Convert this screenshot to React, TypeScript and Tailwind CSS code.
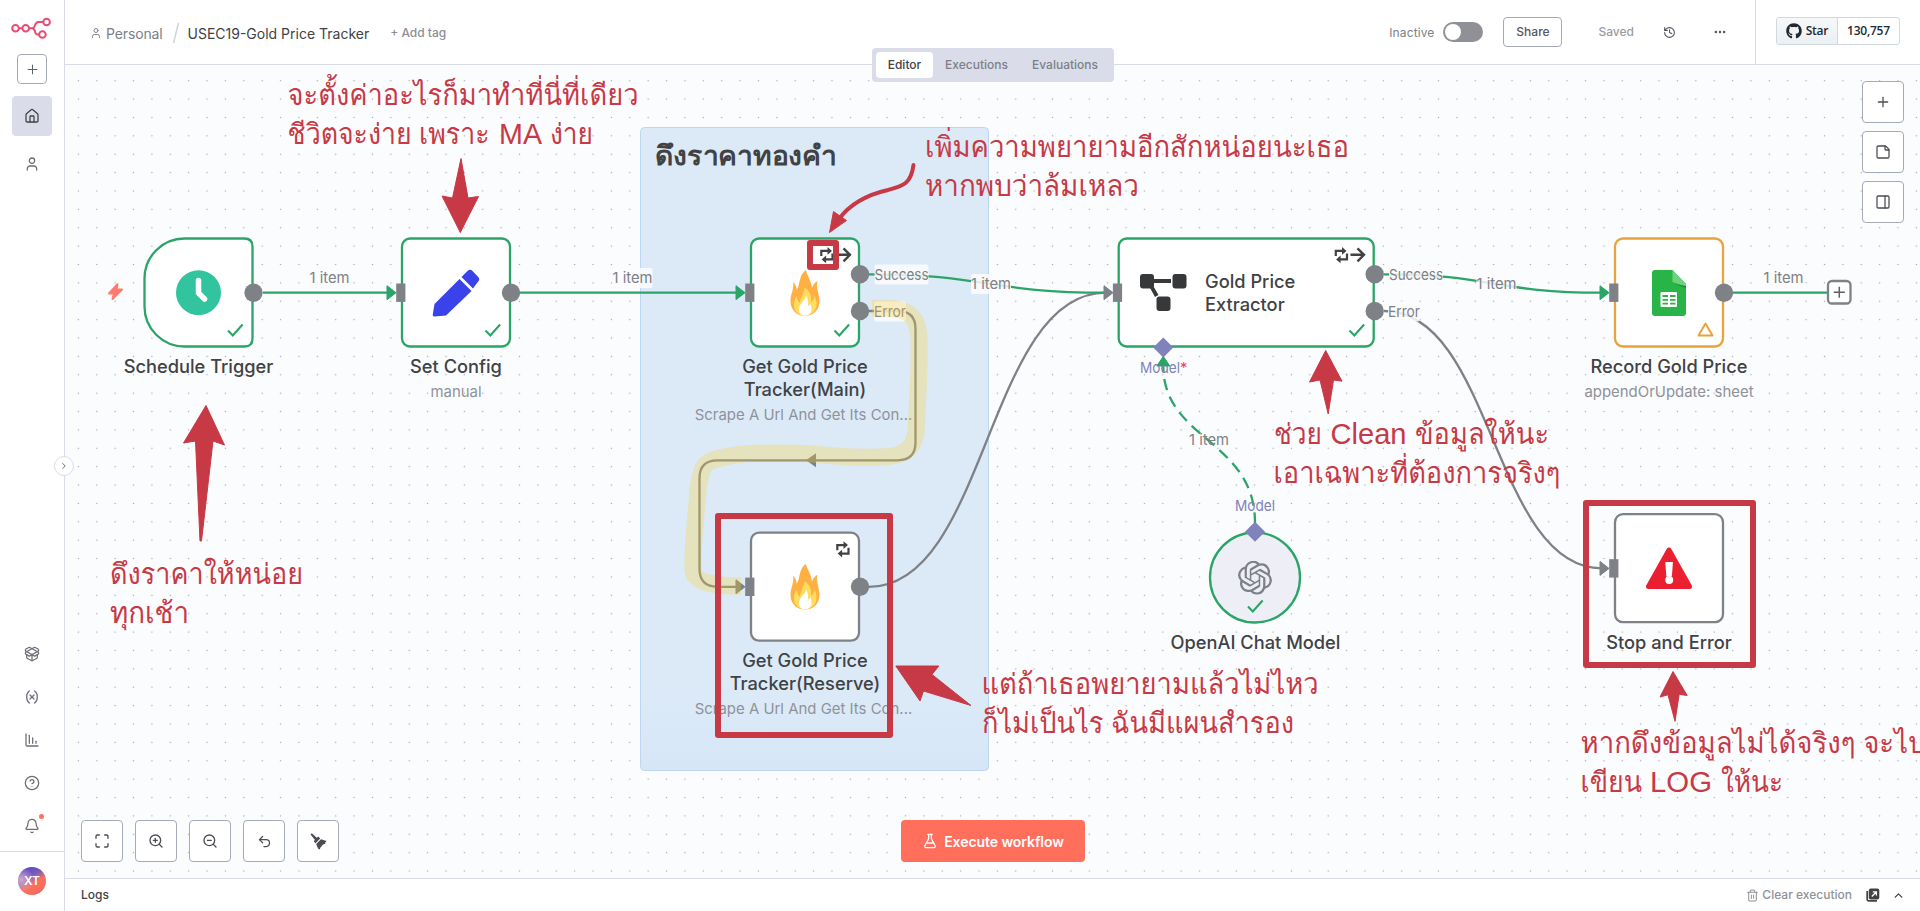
import React from "react";
import { Bell, ChartColumnDecreasing, ChevronRight, ChevronUp, CircleHelp, Ellipsis, FlaskConical, History, House, Maximize, PackageOpen, PanelRight, Plus, StickyNote, Trash2, Undo2, User, Variable, ZoomIn, ZoomOut } from "lucide-react";
import { FaGithub } from "react-icons/fa";
import { SiOpenai } from "react-icons/si";

const GREEN = "#2aa567";
const GREY = "#7e8186";
const RED = "#c73945";

function Logo() {
  return (
    <svg width="42" height="26" viewBox="0 0 42 26" fill="none" stroke="#ea4b71" strokeWidth="2">
      <circle cx="4.500" cy="13.200" r="3.300" />
      <circle cx="14.700" cy="13.200" r="3.300" />
      <circle cx="35.600" cy="7" r="3.300" />
      <circle cx="31.400" cy="19.500" r="3.300" />
      <path d="M7.800 13.200h3.600M18 13.200h3.200c4 0 1.600-6.200 6.400-6.200h4.700M21.200 13.200c3.800 0 1.800 6.300 5.200 6.300h1.700" />
    </svg>
  );
}

function SideIcon({ children, dot }: { children: React.ReactNode; dot?: boolean }) {
  return (
    <div className="relative flex h-[43px] w-full items-center justify-center text-[#6b6e75]">
      {children}
      {dot && <span className="absolute left-[39px] top-[10px] h-[5px] w-[5px] rounded-full bg-[#ff6f5c]" />}
    </div>
  );
}

function Sidebar() {
  return (
    <aside className="flex h-full w-[65px] shrink-0 flex-col items-center border-r border-[#d9dce8] bg-white">
      <div className="mt-[15px] h-[26px] w-[42px]"><Logo /></div>
      <button className="mt-[13px] flex h-[30px] w-[30px] items-center justify-center rounded-[4px] border border-[#a5a9b8] text-[#5c5f66]">
        <Plus size={15} strokeWidth={1.6} />
      </button>
      <div className="mt-3 flex h-10 w-10 items-center justify-center rounded-[4px] bg-[#dadde9] text-[#414244]">
        <House size={16} strokeWidth={1.9} />
      </div>
      <div className="mt-2 flex h-10 w-10 items-center justify-center text-[#6b6e75]">
        <User size={16} strokeWidth={1.9} />
      </div>
      <div className="mt-auto flex w-full flex-col pb-1">
        <SideIcon><PackageOpen size={16} strokeWidth={1.9} /></SideIcon>
        <SideIcon><Variable size={16} strokeWidth={1.9} /></SideIcon>
        <SideIcon><ChartColumnDecreasing size={16} strokeWidth={1.9} /></SideIcon>
        <SideIcon><CircleHelp size={16} strokeWidth={1.9} /></SideIcon>
        <SideIcon dot><Bell size={16} strokeWidth={1.9} /></SideIcon>
      </div>
      <div className="flex h-[60px] w-full items-center justify-center border-t border-[#d9dce8] pb-[2px]">
        <div className="flex h-7 w-7 items-center justify-center rounded-full bg-[radial-gradient(circle_at_12%_45%,#cfaacb_0%,transparent_45%),linear-gradient(150deg,#5b4bc4_15%,#7d5cb5_38%,#ff6f5c_58%,#f56c5c_82%,#6f5cc8_100%)] text-[12px] font-semibold text-white">XT</div>
      </div>
    </aside>
  );
}

function Header() {
  return (
    <header className="flex h-[65px] shrink-0 items-center border-b border-[#d9dce8] bg-white">
      <div className="flex items-center pl-[25px] pt-[2px]">
        <User size={12} strokeWidth={2} className="text-[#7d8087]" />
        <span className="ml-[4px] text-[14px] tracking-[-0.01em] text-[#7d8087]">Personal</span>
        <svg width="8" height="22" className="ml-[9px]"><path d="M6.5 1 1.5 21" stroke="#d0d4e2" strokeWidth="1.6" /></svg>
        <span className="ml-[8px] text-[14px] text-[#414244]">USEC19-Gold Price Tracker</span>
        <span className="ml-[21px] text-[12px] font-medium text-[#8b8e95]">+ Add tag</span>
      </div>
      <div className="ml-auto flex h-full items-center">
        <span className="pt-[2px] text-[12px] tracking-[0.01em] text-[#7d8087]">Inactive</span>
        <span className="ml-[9px] flex h-5 w-10 items-center rounded-full bg-[#8f9196] pl-[1.5px]"><span className="h-4 w-4 rounded-full bg-white" /></span>
        <span className="ml-[20px] flex h-[30px] w-[59px] items-center justify-center rounded-[4px] border border-[#a5a9b8] text-[12px] font-medium text-[#555860]">Share</span>
        <span className="ml-[36px] text-[12px] font-medium text-[#999ca3]">Saved</span>
        <History size={13} strokeWidth={2} className="ml-[29px] text-[#555860]" />
        <Ellipsis size={14} strokeWidth={2.4} className="ml-[37px] text-[#555860]" />
        <div className="ml-[28px] flex h-full w-[165px] items-center border-l border-[#d9dce8] pl-[20px]">
          <div className="mb-[2px] flex h-7 w-[124px] overflow-hidden rounded-[3px] border border-[#d1d9e0] font-['Open_Sans',sans-serif] text-[12px] font-semibold tracking-[-0.02em] text-[#24292f]">
            <span className="flex w-[61px] items-center justify-center gap-[4px] border-r border-[#d1d9e0] bg-linear-to-b from-[#f6f8fa] to-[#ebf0f4]"><FaGithub size={16} />Star</span>
            <span className="flex flex-1 items-center justify-center">130,757</span>
          </div>
        </div>
      </div>
    </header>
  );
}

function Check({ x, y }: { x: number; y: number }) {
  return <path d={`M${x - 7.5} ${y + 0.5}l4.8 5 9.8-11`} fill="none" stroke={GREEN} strokeWidth="2.1" />;
}

function Retry({ x, y }: { x: number; y: number }) {
  return (
    <g transform={`translate(${x} ${y})`}>
      <g fill="none" stroke="#414244" strokeWidth="2.200">
        <path d="M1.800 8.800V3.600h7M13 6.200v5.900H5.500" />
      </g>
      <path d="M8 -.3l4.500 3.900-4.500 3.900zM6.600 8.200v7.800l-4.500-3.900z" fill="#414244" />
    </g>
  );
}

function ArrowRight({ x, y }: { x: number; y: number }) {
  return <path d={`M${x - 1} ${y}h13.500M${x + 6} ${y - 6.5}l6.500 6.500-6.500 6.500`} fill="none" stroke="#414244" strokeWidth="2.400" />;
}

function Fire({ x, y }: { x: number; y: number }) {
  return (
    <g transform={`translate(${x} ${y})`}>
      <path d="M15.500 0C16 5 20.500 9 21.500 18 22.500 15 24 12.500 27 11 25 17 29 24 29 31 29 40 23 45.700 14.500 45.700 6 45.700 0 40 0 31 0 24 3.500 20 2.700 12 5 14 6 17 6.300 20 10 14 8 5 15.500 0z" fill="#ffb042" />
      <path d="M14 17.500C13.500 24 10 27 9.200 33 7.500 31.500 6.500 29 6 26 3 31 3 36 4.500 40 6.500 43.500 10 45.500 14.500 45.500 20 45.500 26.500 41.500 26 33 25.800 30 25 28 24 26 23.500 29 22.500 31 20.500 32 21.500 25 18 20 14 17.500z" fill="#ffdc5e" />
      <path d="M15.500 25.500C15.500 30 8.500 33 8.500 39.500 8.500 43.500 11 45.500 14.500 45.500 18.500 45.500 21 43 21 39 21 37 20.500 35 19.800 33.500 19.300 35 18.500 35.800 17.500 36 18.200 32 17 28 15.500 25.500z" fill="#fff" />
    </g>
  );
}

function Input({ x, y }: { x: number; y: number }) {
  return <rect x={x - 4.6} y={y - 9.2} width="9.200" height="18.400" fill={GREY} />;
}

function Output({ x, y }: { x: number; y: number }) {
  return <circle cx={x} cy={y} r="9.200" fill={GREY} />;
}

function Head({ x, y, color }: { x: number; y: number; color: string }) {
  return <path d={`M${x - 9} ${y - 7}v14l9-7z`} fill={color} stroke={color} strokeWidth="1" strokeLinejoin="round" />;
}

function Box({ x, y, w = 108, color }: { x: number; y: number; w?: number; color: string }) {
  return <rect x={x} y={y} width={w} height="108" rx="8" fill="#fff" stroke={color} strokeWidth="2.300" />;
}

function Name({ x, y, children }: { x: number; y: number; children: string }) {
  return <text x={x} y={y} textAnchor="middle" fontSize="18.250" fill="#414244" fontWeight="500">{children}</text>;
}

function Sub({ x, y, children }: { x: number; y: number; children: string }) {
  return <text x={x} y={y} textAnchor="middle" fontSize="14.950" fill="#8f9299">{children}</text>;
}

function Label({ x, y, w, color = GREY, plate = true, children }: { x: number; y: number; w: number; color?: string; plate?: boolean; children: string }) {
  return (
    <g>
      {plate && <rect x={x - w / 2} y={y - 10} width={w} height="20" rx="2" fill="#fbfcfe" fillOpacity=".85" />}
      <text x={x} y={y + 5} textAnchor="middle" fontSize="14.800" fill={color} textLength={w} lengthAdjust="spacingAndGlyphs">{children}</text>
    </g>
  );
}

const notes: { x: number; y: number; w: number; text: string }[] = [
  { x: 287.500, y: 105, w: 351, text: "จะตั้งค่าอะไรก็มาทำที่นี่ที่เดียว" },
  { x: 287.500, y: 143.500, w: 202, text: "ชีวิตจะง่าย เพราะ" },
  { x: 499, y: 143.500, w: 43, text: "MA" },
  { x: 550, y: 143.500, w: 43, text: "ง่าย" },
  { x: 925, y: 156.500, w: 424, text: "เพิ่มความพยายามอีกสักหน่อยนะเธอ" },
  { x: 925, y: 195.500, w: 214, text: "หากพบว่าล้มเหลว" },
  { x: 110, y: 584, w: 193, text: "ดึงราคาให้หน่อย" },
  { x: 110, y: 623, w: 79, text: "ทุกเช้า" },
  { x: 1274, y: 443.500, w: 48, text: "ช่วย" },
  { x: 1330.500, y: 443.500, w: 76, text: "Clean" },
  { x: 1415, y: 443.500, w: 134, text: "ข้อมูลให้นะ" },
  { x: 1273.500, y: 482.500, w: 287, text: "เอาเฉพาะที่ต้องการจริงๆ" },
  { x: 981.500, y: 694, w: 337, text: "แต่ถ้าเธอพยายามแล้วไม่ไหว" },
  { x: 982, y: 733, w: 312, text: "ก็ไม่เป็นไร ฉันมีแผนสำรอง" },
  { x: 1580.500, y: 753, w: 345, text: "หากดึงข้อมูลไม่ได้จริงๆ จะไป" },
  { x: 1580.500, y: 792, w: 61.500, text: "เขียน" },
  { x: 1650, y: 792, w: 62, text: "LOG" },
  { x: 1721, y: 792, w: 62, text: "ให้นะ" },
];

function Diagram() {
  return (
    <svg width="1855" height="813" viewBox="65 65 1855 813" className="absolute inset-0" fontFamily="Inter, sans-serif">
      <defs>
        <pattern id="dots" x="69.200" y="71.500" width="18.380" height="18.380" patternUnits="userSpaceOnUse">
          <circle cx="9.190" cy="9.190" r=".75" fill="#a6a9b0" />
        </pattern>
        <linearGradient id="sticky" x1="0" y1="0" x2="0" y2="1">
          <stop offset=".88" stopColor="#dceaf8" />
          <stop offset="1" stopColor="#d6e6f6" />
        </linearGradient>
      </defs>
      <rect x="65" y="65" width="1855" height="813" fill="url(#dots)" />
      <rect x="640.500" y="127.500" width="348" height="643" rx="4" fill="url(#sticky)" stroke="#bcd7f1" />
      <text x="654.500" y="165" fontSize="27" fontWeight="700" fill="#414244" textLength="182" lengthAdjust="spacingAndGlyphs">ดึงราคาทองคำ</text>

      <g fill="none" stroke={GREY} strokeWidth="2.300">
        <path d="M869 586.800C987 586.800 987 292.700 1106 292.700" />
        <path d="M1384 311C1493 311 1493 568.400 1602 568.400" />
        <path d="M869 311H897.500Q915.500 311 915.500 329V442.300Q915.500 460.300 897.500 460.300H717.500Q699.500 460.300 699.500 478.300V568.800Q699.500 586.800 717.500 586.800H740" />
      </g>
      <g fill="none" stroke={GREEN} strokeWidth="2.300">
        <path d="M263 292.700H388M520 292.700H738" />
        <path d="M869 274.300C987 274.300 987 292.700 1106 292.700" />
        <path d="M1384 274.300C1493 274.300 1493 292.700 1602 292.700" />
        <path d="M1733 292.700H1827" />
        <path d="M1255 523C1255 440 1163.300 440 1163.300 366" strokeDasharray="9.200 9.200" strokeLinecap="square" />
      </g>
      <path d="M806 460.300l10-7v14z" fill={GREY} />
      <Head x={396} y={292.700} color={GREEN} />
      <Head x={745} y={292.700} color={GREEN} />
      <Head x={1113} y={292.700} color={GREY} />
      <Head x={1609} y={292.700} color={GREEN} />
      <Head x={1609} y={568.400} color={GREY} />
      <Head x={745} y={586.800} color={GREY} />
      <path d="M1163.300 356.500l6.500 9.500h-13z" fill={GREEN} stroke={GREEN} strokeLinejoin="round" />

      <Label x={329.500} y={278} w={40}>1 item</Label>
      <Label x={632.500} y={278} w={40}>1 item</Label>
      <Label x={991} y={284} w={40}>1 item</Label>
      <Label x={1496.500} y={284} w={40}>1 item</Label>
      <Label x={1783.500} y={278} w={40}>1 item</Label>
      <Label x={1209} y={440} w={40} plate={false}>1 item</Label>
      <Label x={901.500} y={274.500} w={54}>Success</Label>
      <Label x={1416} y={274.500} w={54}>Success</Label>
      <Label x={890} y={311.500} w={32}>Error</Label>
      <Label x={1404} y={311.500} w={32}>Error</Label>
      <Label x={1160} y={368} w={40} color="#7f82bb" plate={false}>Model</Label>
      <text x="1180" y="373" fontSize="14.800" fill="#f3453f">*</text>
      <Label x={1255} y={506} w={40} color="#7f82bb" plate={false}>Model</Label>

      <path d="M184.500 238.500H244.500Q252.500 238.500 252.500 246.500V338.500Q252.500 346.500 244.500 346.500H184.500A40 40 0 0 1 144.500 306.500V278.500A40 40 0 0 1 184.500 238.500Z" fill="#fff" stroke={GREEN} strokeWidth="2.300" />
      <Box x={402} y={238.500} color={GREEN} />
      <Box x={751} y={238.500} color={GREEN} />
      <Box x={1118.700} y={238.500} w={255} color={GREEN} />
      <Box x={1615} y={238.500} color="#e8a33c" />
      <Box x={751} y={532.700} color={GREY} />
      <Box x={1615} y={514.200} color={GREY} />
      <circle cx="1255" cy="577.500" r="45" fill="#eeeff6" stroke={GREEN} strokeWidth="2.300" />

      <path d="M117.500 284.200l-8.500 9.300h5l-1.500 5.500 9.500-9.500h-5.500z" fill="#ff7b6b" stroke="#ff7b6b" strokeWidth="2" strokeLinejoin="round" />
      <circle cx="198.500" cy="292.700" r="22.500" fill="#31c49f" />
      <path d="M198.500 280.500v12.500l6 6" fill="none" stroke="#fff" strokeWidth="5.500" strokeLinecap="round" strokeLinejoin="round" />

      <g fill="#3a42e9">
        <path d="M459.500 279l12 12-25.500 24.500-11.500 1c-1.500 0-2-1-1.700-2.200l1.700-10.300z" />
        <path d="M461.500 277l6-6c1.700-1.600 3.500-1.600 5 0l5.500 5.700c1.700 1.600 1.700 3.400 0 5l-5 6.800z" />
      </g>

      <Fire x={790.500} y={270} />
      <Fire x={790.500} y={563.800} />
      <Retry x={819.500} y={247.300} />
      <ArrowRight x={837.500} y={254.800} />
      <Retry x={1334} y={247.300} />
      <ArrowRight x={1351.500} y={254.800} />
      <Retry x={835.500} y={541.500} />

      <g fill="#37383a">
        <rect x="1140" y="274" width="14" height="14.500" rx="3" />
        <rect x="1172.500" y="274" width="14" height="14.500" rx="3" />
        <rect x="1156.500" y="296.500" width="14" height="14.500" rx="3" />
        <path d="M1153 279h18v4h-18zM1149.500 287l3.500-1.500 5.500 9.500-3.500 2z" />
      </g>
      <text x="1205" y="288" fontSize="18.250" fontWeight="500" fill="#414244">Gold Price</text>
      <text x="1205" y="311" fontSize="18.250" fontWeight="500" fill="#414244">Extractor</text>

      <path d="M1655 270h17.500l13.500 14v29a3 3 0 0 1-3 3h-28a3 3 0 0 1-3-3v-40a3 3 0 0 1 3-3z" fill="#28b446" />
      <path d="M1672.500 270l13.500 14v3l-13.500-5z" fill="#6ed17d" />
      <path d="M1674 283.500l12 5v-2.500z" fill="#1e9438" />
      <rect x="1660.500" y="292" width="16.500" height="15" rx="1" fill="#fff" />
      <path d="M1662.500 296h5.500M1670 296h5.500M1662.500 299.800h5.500M1670 299.800h5.500M1662.500 303.600h5.500M1670 303.600h5.500" stroke="#28b446" strokeWidth="1.800" />
      <path d="M1705.500 323.500l7 12h-14z" fill="none" stroke="#e8a33c" strokeWidth="2" strokeLinejoin="round" />

      <path d="M1669 550l20.500 36.500h-41z" fill="#ea1f30" stroke="#ea1f30" strokeWidth="5" strokeLinejoin="round" />
      <path d="M1665.300 562h7.600l-1 14.500h-5.600z" fill="#fff" />
      <circle cx="1669.200" cy="580" r="4" fill="#fff" />

      <SiOpenai x={1238} y={560.700} size={34} color="#7d8087" />

      <Check x={235.500} y={330} />
      <Check x={493} y={330} />
      <Check x={842} y={330} />
      <Check x={1357} y={330} />
      <Check x={1255.500} y={606} />

      <Output x={253.500} y={292.700} />
      <Input x={400.800} y={292.700} />
      <Output x={511} y={292.700} />
      <Input x={749.800} y={292.700} />
      <Output x={860} y={274.300} />
      <Output x={860} y={311} />
      <Input x={749.800} y={586.800} />
      <Output x={860} y={586.800} />
      <Input x={1117.500} y={292.700} />
      <Output x={1374.700} y={274.300} />
      <Output x={1374.700} y={311} />
      <Input x={1613.800} y={292.700} />
      <Output x={1724} y={292.700} />
      <Input x={1613.800} y={568.400} />
      <path d="M1163.300 337.500l10 10-10 10-10-10zM1255 521.700l10 10-10 10-10-10z" fill="#7f82bb" />
      <path d="M1163.300 356.500l6.500 9.500h-13z" fill={GREEN} />
      <rect x="1828" y="281" width="22.500" height="22.500" rx="4" fill="#fff" stroke={GREY} strokeWidth="2.300" />
      <path d="M1833.800 292.300h11M1839.300 286.800v11" stroke="#5c5f66" strokeWidth="1.500" />

      <Name x={198.500} y={373}>Schedule Trigger</Name>
      <Name x={456} y={373}>Set Config</Name>
      <Sub x={456} y={397}>manual</Sub>
      <Name x={805} y={373}>Get Gold Price</Name>
      <Name x={805} y={396}>Tracker(Main)</Name>
      <Sub x={803.500} y={420}>Scrape A Url And Get Its Con...</Sub>
      <Name x={805} y={667}>Get Gold Price</Name>
      <Name x={805} y={690}>Tracker(Reserve)</Name>
      <Sub x={803.500} y={714}>Scrape A Url And Get Its Con...</Sub>
      <Name x={1255.500} y={649}>OpenAI Chat Model</Name>
      <Name x={1669} y={373}>Record Gold Price</Name>
      <Sub x={1669} y={397}>appendOrUpdate: sheet</Sub>
      <Name x={1669} y={649}>Stop and Error</Name>

      <path d="M872 308C895 308 918 306 919 338C920 380 917 400 916.500 425C916 450 903 457 880 457C840 459 830 454 790 453C760 453 750 452 735 455C705 461 702 460 698 490C695 530 692 550 693 570C694 582 712 586 741 586" fill="none" stroke="#ffcb28" strokeOpacity=".28" strokeWidth="17" />

      <g fill="none" stroke={RED} strokeWidth="6" strokeLinejoin="round">
        <rect x="718" y="516" width="172" height="219" />
        <rect x="1586" y="503" width="167" height="162" />
        <rect x="810" y="243" width="26" height="24" />
      </g>
      <path d="M913.500 165C911 184 903 186 888 190C866 195 850 204 839 219" fill="none" stroke={RED} strokeWidth="4" strokeLinecap="round" />
      <g fill={RED} stroke={RED} strokeWidth="1" strokeLinejoin="round">
        <path d="M829.500 232.500l4-21 13 9z" />
        <path d="M460.300 232.500L442 196l10.500 2 8.500-39.500 7 39.500 10.500-1.500z" />
        <path d="M206 405.500L183.500 443l12-2 4.500 100h1.500l11.500-100 11.500 4z" />
        <path d="M1325.700 350.500L1309.500 382l10.500-2 8.200 34 5.300-34 8.500 1.200z" />
        <path d="M895.800 666h43l-6.800 8.500 39 31-47.500-14.500-3.500 10z" />
        <path d="M1673 671.500L1660 697l8-2.200 7 26.500 4.200-27 8 1.200z" />
      </g>
      <g fill={RED} fontSize="29" fontFamily="'Liberation Sans', Loma, 'Noto Sans Thai Looped', sans-serif">
        {notes.map((n) => (
          <text key={n.text} x={n.x} y={n.y} textLength={n.w} lengthAdjust="spacingAndGlyphs">{n.text}</text>
        ))}
      </g>
    </svg>
  );
}

function ToolButton({ children }: { children: React.ReactNode }) {
  return <button className="flex h-[42px] w-[42px] items-center justify-center rounded-[4px] border border-[#a5a9b8] bg-white text-[#4b4d52]">{children}</button>;
}

function Broom() {
  return (
    <svg width="17" height="17" viewBox="0 0 17 17" fill="#4b4d52">
      <path d="M.5 1.500L1.800.3l4.900 4.400L8.200 3.600l2 2-4.700 4.600-1.700-1.700 1-1.700z" />
      <path d="M6.200 10.900l4.800-4.700 5.500 1.700-1.500 2.100.5.800-2.500.8-1.600 2-.8.600-.9 2.400-1.500-.8-1-2.200z" />
    </svg>
  );
}

function Canvas() {
  return (
    <main className="relative min-h-0 flex-1 bg-[#fbfcfe]">
      <div className="absolute inset-0 overflow-hidden"><Diagram /></div>
      <nav className="absolute left-[807px] top-[-17px] flex h-[34px] w-[242px] items-center rounded-[4px] bg-[#dadde9] p-1 text-[12px] font-medium text-[#7d8087]">
        <span className="flex h-[26px] w-[57px] items-center justify-center rounded-[4px] bg-white text-[#414244]">Editor</span>
        <span className="flex w-[87px] justify-center">Executions</span>
        <span className="flex flex-1 justify-center">Evaluations</span>
      </nav>
      <div className="absolute right-4 top-4 flex flex-col gap-2">
        <ToolButton><Plus size={16} strokeWidth={1.9} /></ToolButton>
        <ToolButton><StickyNote size={16} strokeWidth={1.9} /></ToolButton>
        <ToolButton><PanelRight size={16} strokeWidth={1.9} /></ToolButton>
      </div>
      <div className="absolute bottom-4 left-4 flex gap-3">
        <ToolButton><Maximize size={16} strokeWidth={2} /></ToolButton>
        <ToolButton><ZoomIn size={16} strokeWidth={2} /></ToolButton>
        <ToolButton><ZoomOut size={16} strokeWidth={2} /></ToolButton>
        <ToolButton><Undo2 size={15} strokeWidth={2} /></ToolButton>
        <ToolButton><Broom /></ToolButton>
      </div>
      <button className="absolute bottom-4 left-[836px] flex h-[42px] w-[184px] items-center justify-center gap-[6px] rounded-[4px] bg-[#ff6f5c] text-[14px] font-semibold tracking-[-0.005em] text-white">
        <FlaskConical size={16} strokeWidth={1.9} />Execute workflow
      </button>
      <div className="absolute left-[-11px] top-[391px] flex h-5 w-5 items-center justify-center rounded-full border border-[#d9dce8] bg-white text-[#6b6e75]">
        <ChevronRight size={10} strokeWidth={2.4} />
      </div>
    </main>
  );
}

function LogsBar() {
  return (
    <footer className="flex h-[33px] shrink-0 items-center border-t border-[#d9dce8] bg-white pl-4 pr-[15px] text-[12px]">
      <span className="font-medium text-[#414244]">Logs</span>
      <div className="ml-auto flex items-center">
        <Trash2 size={13} strokeWidth={1.9} className="text-[#8f9299]" />
        <span className="ml-[3px] font-medium text-[#8f9299]">Clear execution</span>
        <svg width="14" height="14" viewBox="0 0 14 14" className="ml-[14px]">
          <path d="M1.200 3v8.300a1.500 1.500 0 0 0 1.500 1.500H11" fill="none" stroke="#414244" strokeWidth="1.700" />
          <rect x="2.800" y=".5" width="10.500" height="11" rx="2" fill="#414244" />
          <path d="M5.800 8.500l4.400-4.500M6.800 3.800h3.600v3.600" fill="none" stroke="#fff" strokeWidth="1.300" />
        </svg>
        <ChevronUp size={13} strokeWidth={2.4} className="ml-[12px] text-[#414244]" />
      </div>
    </footer>
  );
}

export default function App() {
  return (
    <div className="flex h-[911px] w-[1920px] overflow-hidden bg-white font-[Inter,sans-serif]">
      <Sidebar />
      <div className="flex min-w-0 flex-1 flex-col">
        <Header />
        <Canvas />
        <LogsBar />
      </div>
    </div>
  );
}
